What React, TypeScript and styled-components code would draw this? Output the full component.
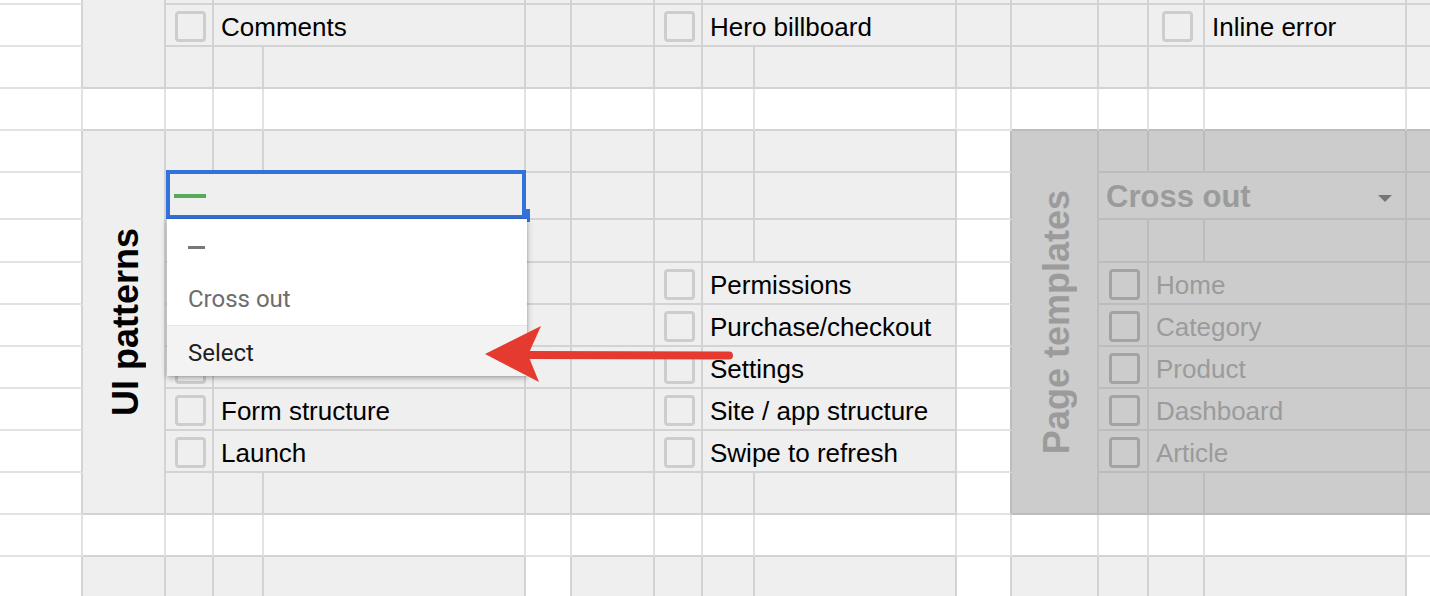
import React from 'react';
import styled, { createGlobalStyle } from 'styled-components';

const GlobalStyle = createGlobalStyle`
  html, body {
    margin: 0;
    padding: 0;
    background: #fff;
    overflow: hidden;
  }
  body {
    font-family: 'Liberation Sans', Arial, sans-serif;
  }
`;

// column widths and row heights of the sheet; the window shows 1430x596 of it
const COLS = [83, 83, 48, 50, 262, 46, 83, 48, 52, 202, 55, 87, 50, 56, 202, 100];
const ROWS = [5, 42, 42, 42, 42, 47, 43, 42, 42, 42, 42, 42, 42, 42, 42];

type Tone = 'white' | 'gray' | 'dark';

const FILL: Record<Tone, string> = { white: '#ffffff', gray: '#efefef', dark: '#cccccc' };
const LINE: Record<Tone, string> = { white: '#e2e2e2', gray: '#d3d3d3', dark: '#bcbcbc' };
const RANK: Record<Tone, number> = { white: 0, gray: 1, dark: 2 };

const toneAt = (r: number, c: number): Tone => {
  if (c <= 1 || r > 14 || c > 16) return 'white';
  if (r <= 2) return 'gray';
  if (r === 3 || r === 13) return 'white';
  if (r === 14) return c === 6 || c === 11 || c === 16 ? 'white' : 'gray';
  if (c <= 10) return 'gray';
  if (c === 11) return 'white';
  return 'dark';
};

const darker = (a: Tone, b: Tone) => (RANK[a] >= RANK[b] ? a : b);

type Content =
  | { type: 'check'; muted?: boolean }
  | { type: 'label'; text: string; muted?: boolean }
  | { type: 'side'; text: string; muted?: boolean }
  | { type: 'select' }
  | { type: 'header'; text: string };

type CellSpec = {
  row: number;
  col: number;
  span: number;
  rowSpan: number;
  content?: Content;
};

const LEFT_ITEMS = ['', '', '', 'Form structure', 'Launch'];
const MIDDLE_ITEMS = ['Permissions', 'Purchase/checkout', 'Settings', 'Site / app structure', 'Swipe to refresh'];
const TEMPLATE_ITEMS = ['Home', 'Category', 'Product', 'Dashboard', 'Article'];

const buildCells = (): CellSpec[] => {
  const cells: CellSpec[] = [];
  const add = (row: number, col: number, span = 1, content?: Content, rowSpan = 1) =>
    cells.push({ row, col, span, rowSpan, content });
  const run = (row: number, from: number, to: number) => {
    for (let c = from; c <= to; c++) add(row, c);
  };

  // top section (row 0 is only the bottom edge of a checkbox row)
  add(0, 1);
  add(0, 2, 1, undefined, 3);
  add(0, 3);
  add(0, 4, 2);
  add(0, 6);
  add(0, 7);
  add(0, 8);
  add(0, 9, 2);
  run(0, 11, 16);

  add(1, 1);
  add(1, 3, 1, { type: 'check' });
  add(1, 4, 2, { type: 'label', text: 'Comments' });
  add(1, 6);
  add(1, 7);
  add(1, 8, 1, { type: 'check' });
  add(1, 9, 2, { type: 'label', text: 'Hero billboard' });
  run(1, 11, 13);
  add(1, 14, 1, { type: 'check' });
  add(1, 15, 1, { type: 'label', text: 'Inline error' });
  add(1, 16);

  add(2, 1);
  run(2, 3, 16);

  run(3, 1, 16);

  // UI patterns + Page templates
  add(4, 1);
  add(4, 2, 1, { type: 'side', text: 'UI patterns' }, 9);
  run(4, 3, 11);
  add(4, 12, 1, { type: 'side', text: 'Page templates', muted: true }, 9);
  run(4, 13, 16);

  add(5, 1);
  add(5, 3, 3, { type: 'select' });
  run(5, 6, 11);
  add(5, 13, 3, { type: 'header', text: 'Cross out' });
  add(5, 16);

  for (const r of [6, 12]) {
    add(r, 1);
    run(r, 3, 11);
    run(r, 13, 16);
  }

  for (let i = 0; i < 5; i++) {
    const r = 7 + i;
    add(r, 1);
    add(r, 3, 1, { type: 'check' });
    add(r, 4, 2, { type: 'label', text: LEFT_ITEMS[i] });
    add(r, 6);
    add(r, 7);
    add(r, 8, 1, { type: 'check' });
    add(r, 9, 2, { type: 'label', text: MIDDLE_ITEMS[i] });
    add(r, 11);
    add(r, 13, 1, { type: 'check', muted: true });
    add(r, 14, 2, { type: 'label', text: TEMPLATE_ITEMS[i], muted: true });
    add(r, 16);
  }

  run(13, 1, 16);
  run(14, 1, 16);

  return cells;
};

const CELLS = buildCells();

const Viewport = styled.div`
  width: 1430px;
  height: 596px;
  overflow: hidden;
`;

const Sheet = styled.div`
  position: relative;
  display: grid;
  grid-template-columns: ${COLS.map((w) => `${w}px`).join(' ')};
  grid-template-rows: ${ROWS.map((h) => `${h}px`).join(' ')};
  width: ${COLS.reduce((a, b) => a + b, 0)}px;
`;

const Cell = styled.div<{
  $col: number;
  $span: number;
  $row: number;
  $rowSpan: number;
  $fill: string;
  $right: string;
  $bottom: string;
}>`
  grid-column: ${(p) => p.$col} / span ${(p) => p.$span};
  grid-row: ${(p) => p.$row + 1} / span ${(p) => p.$rowSpan};
  box-sizing: border-box;
  min-width: 0;
  min-height: 0;
  display: flex;
  align-items: center;
  background: ${(p) => p.$fill};
  border-right: 2px solid ${(p) => p.$right};
  border-bottom: 2px solid ${(p) => p.$bottom};
`;

const CheckCell = styled.div`
  flex: 1;
  display: flex;
  justify-content: center;
  padding-left: 3px;
  padding-top: 2px;
`;

const Checkbox = styled.span<{ $muted?: boolean }>`
  display: block;
  width: 31px;
  height: 31px;
  box-sizing: border-box;
  border: 3px solid ${(p) => (p.$muted ? '#a3a3a3' : '#cdcdcd')};
  border-radius: 4px;
`;

const Label = styled.span<{ $muted?: boolean }>`
  padding: 4px 0 0 7px;
  font-size: 26px;
  color: ${(p) => (p.$muted ? '#9b9b9b' : '#000')};
  white-space: nowrap;
`;

const SideLabel = styled.div<{ $muted?: boolean }>`
  flex: 1;
  display: flex;
  justify-content: center;
  align-items: center;
  height: 100%;
  padding-left: 4px;

  span {
    writing-mode: vertical-rl;
    transform: rotate(180deg);
    font-size: 36px;
    font-weight: 700;
    color: ${(p) => (p.$muted ? '#9b9b9b' : '#000')};
    white-space: nowrap;
  }
`;

const HeaderDropdown = styled.div`
  flex: 1;
  display: flex;
  align-items: center;
  justify-content: space-between;
  padding: 3px 13px 0 7px;
  font-size: 31px;
  font-weight: 700;
  color: #9b9b9b;
  white-space: nowrap;
`;

const Caret = styled.span`
  width: 0;
  height: 0;
  border-left: 7px solid transparent;
  border-right: 7px solid transparent;
  border-top: 7px solid #767676;
  margin-top: 2px;
`;

const SelectHost = styled.div`
  position: relative;
  z-index: 2;
  flex: 1;
  align-self: stretch;
  display: flex;
  align-items: center;
  padding-left: 8px;
`;

const SelectionFrame = styled.div`
  position: absolute;
  top: -3px;
  left: 0;
  right: -2px;
  bottom: -1px;
  border: 4px solid #3372dc;
`;

const FillHandle = styled.div`
  position: absolute;
  right: -6px;
  bottom: -4px;
  width: 6px;
  height: 13px;
  background: #3372dc;
`;

const GreenDash = styled.span`
  display: block;
  width: 32px;
  height: 4px;
  margin-top: 1px;
  background: #57aa5b;
`;

const Menu = styled.div`
  position: absolute;
  top: calc(100% + 1px);
  left: 1px;
  width: 360px;
  background: #fff;
  box-shadow: 0 2px 6px rgba(0, 0, 0, 0.32), 0 0 2px rgba(0, 0, 0, 0.12);
  font-family: Roboto, 'Liberation Sans', Arial, sans-serif;
`;

const MenuItem = styled.div<{ $height: number; $active?: boolean; $muted?: boolean }>`
  box-sizing: border-box;
  height: ${(p) => p.$height}px;
  display: flex;
  align-items: center;
  padding: 3px 0 0 21px;
  font-size: 24px;
  color: ${(p) => (p.$muted ? '#6d6d6d' : '#1f1f1f')};
  background: ${(p) => (p.$active ? '#f3f3f3' : '#fff')};
  border-top: ${(p) => (p.$active ? '1px solid #e6e6e6' : 'none')};
`;

const GrayDash = styled.span`
  display: block;
  width: 17px;
  height: 3px;
  margin-top: 2px;
  background: #787878;
`;

const ArrowLayer = styled.svg`
  position: absolute;
  left: 0;
  top: 0;
  z-index: 3;
  pointer-events: none;
`;

const renderContent = (content?: Content) => {
  if (!content) return null;
  switch (content.type) {
    case 'check':
      return (
        <CheckCell>
          <Checkbox $muted={content.muted} />
        </CheckCell>
      );
    case 'label':
      return <Label $muted={content.muted}>{content.text}</Label>;
    case 'side':
      return (
        <SideLabel $muted={content.muted}>
          <span>{content.text}</span>
        </SideLabel>
      );
    case 'header':
      return (
        <HeaderDropdown>
          {content.text}
          <Caret />
        </HeaderDropdown>
      );
    case 'select':
      return (
        <SelectHost>
          <SelectionFrame />
          <FillHandle />
          <GreenDash />
          <Menu>
            <MenuItem $height={51}>
              <GrayDash />
            </MenuItem>
            <MenuItem $height={55} $muted>
              Cross out
            </MenuItem>
            <MenuItem $height={51} $active>
              Select
            </MenuItem>
          </Menu>
        </SelectHost>
      );
  }
};

const App = () => {
  return (
    <Viewport>
      <GlobalStyle />
      <Sheet>
        {CELLS.map((cell) => {
          const tone = toneAt(cell.row, cell.col);
          const rightTone = darker(tone, toneAt(cell.row, cell.col + cell.span));
          const bottomTone = darker(tone, toneAt(cell.row + cell.rowSpan, cell.col));
          return (
            <Cell
              key={`${cell.row}-${cell.col}`}
              $col={cell.col}
              $span={cell.span}
              $row={cell.row}
              $rowSpan={cell.rowSpan}
              $fill={FILL[tone]}
              $right={LINE[rightTone]}
              $bottom={LINE[bottomTone]}
            >
              {renderContent(cell.content)}
            </Cell>
          );
        })}
        <ArrowLayer width={1430} height={596} viewBox="0 0 1430 596">
          <line x1={729} y1={355.5} x2={526} y2={355} stroke="#e53a2f" strokeWidth={8} strokeLinecap="round" />
          <polygon points="485,354 541,326 528,355 539,382" fill="#e53a2f" />
        </ArrowLayer>
      </Sheet>
    </Viewport>
  );
};

export default App;
